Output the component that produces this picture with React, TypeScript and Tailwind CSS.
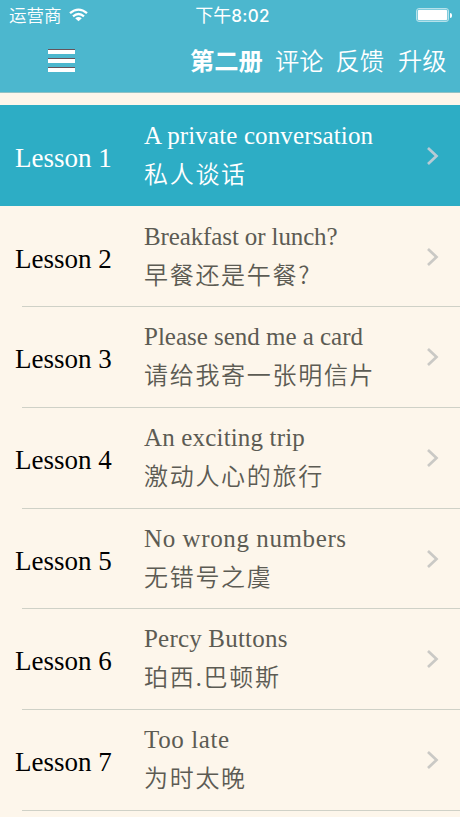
const lessons = [
  { title: "A private conversation", zh: "私人谈话", track: "tracking-[0.13px]" },
  { title: "Breakfast or lunch?", zh: "早餐还是午餐?", track: "tracking-[-0.12px]" },
  { title: "Please send me a card", zh: "请给我寄一张明信片", track: "tracking-[-0.02px]" },
  { title: "An exciting trip", zh: "激动人心的旅行", track: "tracking-[0.17px]" },
  { title: "No wrong numbers", zh: "无错号之虞", track: "tracking-[0.6px]" },
  { title: "Percy Buttons", zh: "珀西.巴顿斯", track: "tracking-[0.2px]" },
  { title: "Too late", zh: "为时太晚", track: "tracking-[0.6px]" },
];

function WifiIcon() {
  return (
    <svg className="ml-[7px] h-[14px] w-[19px]" viewBox="0 0 19 14" fill="none" stroke="white" strokeWidth="2.3">
      <path d="M1 5.2Q9.5-2 18 5.2M4 8.4Q9.5 3.6 15 8.4" />
      <path d="M9.5 13.3 6.2 10.2Q9.5 7.6 12.8 10.2Z" fill="white" stroke="none" />
    </svg>
  );
}

function StatusBar() {
  return (
    <div className="grid h-[30px] grid-cols-3 items-center pr-[8px] pl-[9px] text-white">
      <div className="flex items-center">
        <span className="text-[17.5px] leading-[28px] font-[350]">运营商</span>
        <WifiIcon />
      </div>
      <div className="pl-[4px] text-center text-[18px] leading-[28px] whitespace-nowrap">
        下午<span className="font-['Inter'] text-[17px] font-medium tracking-[0.3px]">8:02</span>
      </div>
      <div className="flex items-center justify-end">
        <div className="h-[14px] w-[33px] rounded-[3px] border border-white/60 p-px">
          <div className="h-full rounded-[1px] bg-white ring-[0.5px] ring-white/60" />
        </div>
        <div className="ml-px h-[5px] w-[2px] rounded-r-full bg-white" />
      </div>
    </div>
  );
}

function MenuIcon() {
  return (
    <div className="-mt-px flex w-[27px] flex-col gap-[4px]">
      {[0, 1, 2].map((n) => (
        <div key={n} className="h-[5px] border-t border-[#66535a] bg-white" />
      ))}
    </div>
  );
}

function Header() {
  return (
    <header className="h-[93px] border-b border-[#91c2c5] bg-[#4cb7ce] font-['Noto_Sans_CJK_SC',sans-serif]">
      <StatusBar />
      <nav className="flex h-[62px] items-center pl-[48px] text-[24.3px] leading-[36px] text-white">
        <MenuIcon />
        <span className="-mt-[3px] ml-[115px] font-bold">第二册</span>
        <span className="-mt-[3px] ml-[12px] font-[350]">评论</span>
        <span className="-mt-[3px] ml-[12px] font-[350]">反馈</span>
        <span className="-mt-[3px] ml-[14px] font-[350]">升级</span>
      </nav>
    </header>
  );
}

export default function App() {
  return (
    <div className="h-[817px] w-[460px] overflow-hidden bg-[#fdf6eb]">
      <Header />
      <main className="mt-[12px] font-['Liberation_Serif',serif]">
        {lessons.map(({ title, zh, track }, i) => (
          <div key={title} className={i === 0 ? "bg-[#2dadc5] text-white" : "text-[#5c5b53]"}>
            <div className="flex h-[100.7px]">
              <div className={`w-[144px] pt-[36px] pl-[15px] text-[27px] leading-[34px] ${i === 0 ? "" : "text-black"}`}>
                Lesson {i + 1}
              </div>
              <div className="w-[276px] pt-[15px] whitespace-nowrap">
                <div className={`text-[25px] leading-[32px] ${track}`}>{title}</div>
                <div className="mt-[3px] font-['Noto_Sans_CJK_SC',sans-serif] text-[24px] leading-[36px] font-[350] tracking-[1.7px]">
                  {zh}
                </div>
              </div>
              <svg className="mt-[42px] ml-[6px] h-[18px] w-[13px]" viewBox="0 0 13 18" fill="none" stroke={i === 0 ? "#b8cbd5" : "#cac9c5"} strokeWidth="2.7">
                <path d="M2 1 10.5 9 2 17" />
              </svg>
            </div>
            {i > 0 && <div className="-mb-px ml-[22px] h-px bg-[#cfd1c7]" />}
          </div>
        ))}
      </main>
    </div>
  );
}
